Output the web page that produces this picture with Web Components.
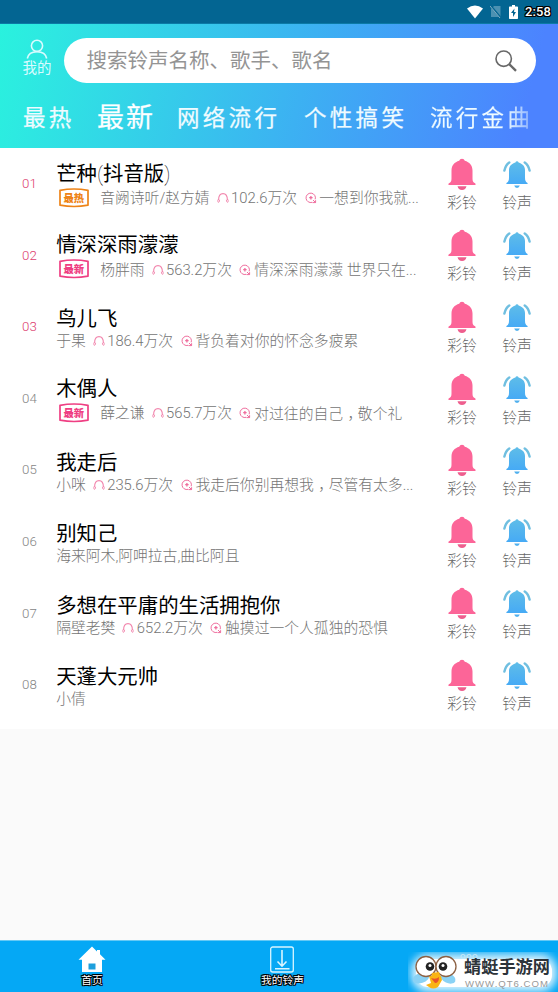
<!DOCTYPE html>
<html lang="zh-CN">
<head>
<meta charset="utf-8">
<title>铃声</title>
<style>
html,body{margin:0;padding:0;background:#fafafa}
body{font-family:Roboto,"Noto Sans CJK SC",sans-serif;width:558px;height:992px;overflow:hidden}
</style>
</head>
<body>
<ring-app></ring-app>
<script>
const define=(name,html)=>customElements.define(name,class extends HTMLElement{
  connectedCallback(){
    if(this.shadowRoot)return;
    this.attachShadow({mode:'open'}).innerHTML=typeof html==='function'?html(this):html;
  }
});

define('status-bar',`<style>
:host{display:flex;height:24px;box-sizing:border-box;background:#036592;align-items:center;justify-content:flex-end;padding-right:7px;border-bottom:1px solid #0b7aa6}
svg{display:block}.w{margin-right:7px}.s{margin-right:8.500px}.b{margin-right:7px}
span{font:500 12.900px/22px Roboto,sans-serif;color:#fff;letter-spacing:.15px;margin-top:1px;text-shadow:1px 0 #000,-1px 0 #000,0 1px #000,0 -1px #000,1px 1px #000,-1px 1px #000,1px -1px #000,-1px -1px #000}
</style>
<svg class="w" width="16" height="14" viewBox="0 0 16 14"><path d="M0 3.600Q8-2.400 16 3.600L8 13.500Z" fill="#fff"/></svg>
<svg class="s" width="11" height="13" viewBox="0 0 11 13"><path d="M4 1h6.500v11H1V4z" fill="#4b91b2"/><path d="M0 0l11 13" stroke="#036592" stroke-width="2"/><path d="M0 1l10 12" stroke="#82aec4" stroke-width="1"/></svg>
<svg class="b" width="9" height="14" viewBox="0 0 9 14"><path d="M3 0h3v1.500h2.300q.7 0 .7.700v11q0 .8-.7.800H.7Q0 14 0 13.200V2.200q0-.7.7-.7H3z" fill="#fff"/><path d="M5.500 3.500L2 8h2v4l3-5H5z" fill="#036592"/></svg>
<span>2:58</span>`);

define('profile-button',`<style>
:host{display:flex;flex-direction:column;align-items:center;width:30px;color:#d9fbff;padding-top:1px}
svg{display:block}span{font-size:14.500px;line-height:17px;white-space:nowrap;margin-top:1px}
</style>
<svg width="22" height="20" viewBox="0 0 22 20" fill="none" stroke="currentColor" stroke-width="1.600"><circle cx="11" cy="6.800" r="5.600"/><path d="M1.300 19.500C2.200 14.800 6 12.800 11 12.800s8.800 2 9.700 6.700"/></svg>
<span><slot></slot></span>`);

define('search-field',`<style>
:host{display:flex;align-items:center;justify-content:space-between;box-sizing:border-box;width:472px;height:45px;border-radius:23px;background:#fff;padding:0 19px 0 22.500px;color:#949494;font-size:20.500px;line-height:45px}
svg{display:block}span{margin-top:1px}
</style><span><slot></slot></span>
<svg width="22" height="22" viewBox="0 0 22 22" fill="none" stroke="#686868"><circle cx="8.700" cy="8.700" r="7.700" stroke-width="1.600"/><path d="M14.200 14.200L21 20.800" stroke-width="2.300"/></svg>`);

define('category-tab',`<style>
:host{display:block;font-size:22.500px;line-height:34px;letter-spacing:3.300px;color:#effbff;white-space:nowrap;-webkit-text-stroke:.25px #effbff}
:host([active]){font-size:27px;letter-spacing:2px;color:#fff}
:host([fade]){background:linear-gradient(90deg,#effbff 72%,rgba(239,251,255,.3) 101%);-webkit-background-clip:text;background-clip:text;color:transparent;-webkit-text-stroke:.25px transparent}
</style><slot></slot>`);

define('ring-header',`<style>
:host{display:flex;flex-direction:column;height:124px;box-sizing:border-box;padding-top:14px;background:linear-gradient(104deg,#29f2de 0%,#2deae1 7%,#3cb1f2 54%,#4c83ff 93%,#4c83ff 100%)}
.top{display:flex;padding-left:22px;gap:12px}
.tabs{display:grid;grid-template-columns:74px 80px 127px 126px 104px;padding-left:23px;margin-top:17px;align-items:center;height:36px}
</style>
<div class="top"><profile-button>我的</profile-button><search-field>搜索铃声名称、歌手、歌名</search-field></div>
<div class="tabs"><category-tab>最热</category-tab><category-tab active>最新</category-tab><category-tab>网络流行</category-tab><category-tab>个性搞笑</category-tab><category-tab fade>流行金曲</category-tab></div>`);

define('song-badge',`<style>
:host{display:grid;width:32px;height:20px;margin:-1px 10.500px 0 1.500px;color:#ef3f83}
:host([hot]){color:#ee8418}
svg,span{grid-area:1/1}span{font:900 10.300px/19px "Noto Sans CJK SC",sans-serif;text-align:center}
</style>
<svg width="32" height="20" viewBox="0 0 32 20"><path d="M2 2.300Q16-.3 30 2.300V17.200Q16 19.800 2 17.200Z" fill="none" stroke="currentColor" stroke-width="1.700" stroke-linejoin="round"/></svg><span><slot></slot></span>`);

define('play-count',`<style>
:host{display:flex;align-items:center;margin-left:7px}svg{margin-right:2.400px}
</style><svg width="12" height="12" viewBox="0 0 12 12" fill="none" stroke="#f287ae" stroke-width="1.100"><path d="M1.600 8C1.600 4 3.200 1.600 6 1.600S10.400 4 10.400 8"/><path d="M1.300 7.200Q.1 9.200 1.300 10.400q1.500-.2 1.300-2.600M10.700 7.200q1.200 2 0 3.200-1.500-.2-1.300-2.600" stroke-width=".9"/></svg><slot></slot>`);

define('song-lyric',`<style>
:host{display:flex;align-items:center;margin-left:7.500px;white-space:pre}svg{margin-right:2.800px}
</style><svg width="12" height="12" viewBox="0 0 12 12" fill="none" stroke="#ef6d9d" stroke-width="1"><path d="M7.200 10.300A4.700 4.700 0 1 1 10.200 7.300M8 8l2.600 2.600H7.500M10.600 10.600V8.200"/><path d="M4.200 5.700h3.400M5.900 4v3.400" stroke-width="1.300"/></svg><span><slot></slot></span>`);

define('ring-action',el=>`<style>
:host{display:flex;flex-direction:column;align-items:center;width:55px;font-size:14.800px;font-weight:300;line-height:20px;color:#666}
svg{display:block}span{margin-top:2px}
</style>${el.getAttribute('kind')==='color'
?`<svg width="30" height="34" viewBox="0 0 30 34"><path d="M12.200 3.800a2.900 2.900 0 0 1 5.600 0C22.500 5.200 25.500 8.500 25.500 13.500v8c0 2.500.5 3.700 2.600 4.800q.9.600.3 1.700H1.600q-.6-1.100.3-1.700c2.100-1.100 2.600-2.300 2.600-4.800v-8c0-5 3-8.300 7.700-9.700z" fill="#fc6598"/><path d="M10.500 29.300h9q-.8 3.700-4.500 3.700t-4.500-3.700z" fill="#ee5e8e"/></svg>`
:`<svg width="30" height="34" viewBox="0 0 30 34"><defs><linearGradient id="g" x2="0" y2="1"><stop stop-color="#5fbde8"/><stop offset="1" stop-color="#46aaf5"/></linearGradient></defs><path d="M13.400 5.500a1.700 1.700 0 0 1 3.200 0C20.500 6.600 23 9.400 23 13v7.500c0 3 .6 4.200 2.200 5.200q.7.500.3 1.300h-21q-.4-.8.300-1.300C6.400 24.700 7 23.500 7 20.500V13c0-3.600 2.500-6.400 6.400-7.500z" fill="url(#g)"/><path d="M12.200 28.500h5.600q-.6 2.400-2.800 2.400t-2.800-2.400z" fill="#50b0ee"/><path d="M7.300 5.500Q3.600 8 2.400 13.500M22.700 5.500q3.700 2.500 4.900 8" fill="none" stroke="#70bfe0" stroke-width="2.400" stroke-linecap="round"/></svg>`}
<span><slot></slot></span>`);

define('song-row',`<style>
:host{display:grid;grid-template-columns:56.200px 1fr auto;height:71.600px;box-sizing:border-box}
.no{font-size:13.300px;font-weight:300;line-height:72px;padding-left:22px;color:#858585;font-family:Roboto,sans-serif}
:host([top]) .no{color:#dd416f}
.info{display:flex;flex-direction:column;min-width:0}
.title{font-size:20.400px;line-height:26px;color:#000;padding-top:15.300px;height:26px;white-space:nowrap}
:host([tag]) .title{padding-top:12.800px;padding-bottom:2.500px}
.sub{display:flex;align-items:center;height:20px;margin-top:-1px;font-size:14.800px;font-weight:300;color:#747474;line-height:20px;white-space:nowrap}
.act{display:flex;padding:8.800px 13.500px 0 0}
</style>
<div class="no"><slot name="no"></slot></div>
<div class="info"><div class="title"><slot name="title"></slot></div><div class="sub"><slot></slot></div></div>
<div class="act"><ring-action kind="color">彩铃</ring-action><ring-action kind="tone">铃声</ring-action></div>`);

const songs=[
['芒种<span style="font-weight:100">(</span>抖音版<span style="font-weight:100">)</span>','最热','音阙诗听/赵方婧','102.6万次','一想到你我就...'],
['情深深雨濛濛','最新','杨胖雨','563.2万次','情深深雨濛濛 世界只在...'],
['鸟儿飞','','于果','186.4万次','背负着对你的怀念多疲累'],
['木偶人','最新','薛之谦','565.7万次','对过往的自己，敬个礼'],
['我走后','','小咪','235.6万次','我走后你别再想我，尽管有太多...'],
['别知己','','海来阿木,阿呷拉古,曲比阿且'],
['多想在平庸的生活拥抱你','','隔壁老樊','652.2万次','触摸过一个人孤独的恐惧'],
['天蓬大元帅','','小倩']];
define('song-list',()=>`<style>
:host{display:block;background:#fff;height:581px}
/* half-width comma, centred in one character cell */
i{font-style:normal;font-family:"Noto Sans CJK SC",sans-serif;font-feature-settings:"halt";padding:0 2.900px 0 4.500px}
</style>${songs.map(([t,b,a,c,l],n)=>`<song-row${n<3?' top':''}${b?' tag':''}><span slot="no">0${n+1}</span><span slot="title">${t}</span>${b?`<song-badge${b==='最热'?' hot':''}>${b}</song-badge>`:''}<span>${a}</span>${c?`<play-count>${c}</play-count><song-lyric>${l.replace('，','<i>，</i>')}</song-lyric>`:''}</song-row>`).join('')}`);

define('nav-item',el=>`<style>
:host{display:flex;flex-direction:column;align-items:center;justify-self:center;color:#fff;font-size:10.700px;line-height:14px;padding-top:5px}
svg{display:block}span{margin-top:1px;text-shadow:1px 0 #000,-1px 0 #000,0 1px #000,0 -1px #000,1px 1px #000,-1px 1px #000,1px -1px #000,-1px -1px #000}
</style>${el.hasAttribute('home')
?`<svg width="28" height="27" viewBox="0 0 28 27"><path d="M14 .5L.5 13.800H4V26h20V13.800h3.500L22 8.300V4h-3v1.500z" fill="#fff"/><path d="M10.500 17.500h7v6h-7z" fill="#1e9fdc"/></svg>`
:`<svg width="26" height="27" viewBox="0 0 26 27" fill="none" stroke="#d9f5ff" stroke-width="1.300"><rect x="1.700" y="1" width="22.600" height="25" rx="2"/><path d="M13 4v16M8.500 15.500L13 20.200l4.500-4.700M6 22.800h14.500" stroke-width="1.600"/></svg>`}
<span><slot></slot></span>`);

define('site-mark',`<style>
:host{position:absolute;right:0;bottom:0;width:150px;height:40px;overflow:hidden}
.m{position:relative;display:flex;padding:0 0 0 4px;height:40px;box-sizing:border-box}
.m::before{content:"";position:absolute;inset:7px 6px 5px 8px;border-radius:12px;background:#fff;box-shadow:0 0 9px 5px rgba(255,255,255,.85)}
svg,.t{position:relative}
.t{display:flex;flex-direction:column;padding-left:6px;padding-top:1px}
.m .dots{position:absolute;left:51px;top:1px}
b{font:700 17.200px/26px "Noto Sans CJK SC",sans-serif;color:#2d343a;white-space:nowrap}
small{font:400 9.600px/11px "Liberation Sans",sans-serif;letter-spacing:1px;color:#999;white-space:nowrap;padding-left:1px;margin-top:-1px}
</style>
<div class="m"><svg width="46" height="38" viewBox="0 0 46 38"><ellipse cx="9" cy="26" rx="8.500" ry="5" fill="#8ad2f5" transform="rotate(-18 9 26)"/><ellipse cx="36" cy="26" rx="8" ry="5" fill="#8ad2f5" transform="rotate(25 36 26)"/><path d="M17 24l12 0 1 4-4 7q-5 3-9 0l-3-2 5-2z" fill="#fab414"/><circle cx="14" cy="14.500" r="10" fill="#fff" stroke="#8c6144" stroke-width="1.300"/><circle cx="34" cy="14.500" r="10" fill="#fff" stroke="#8c6144" stroke-width="1.300"/><path d="M20 21l7-1 2 7-4 3-6-3z" fill="#fab414"/><circle cx="18" cy="14.500" r="4.300" fill="#222"/><circle cx="31" cy="14.500" r="4.300" fill="#222"/><circle cx="18" cy="13.500" r="1.500" fill="#fff"/><circle cx="31" cy="13.500" r="1.500" fill="#fff"/><path d="M19 26q5 2 8-1 0 6-4 6z" fill="#e8532a"/></svg>
<svg class="dots" width="20" height="7" viewBox="0 0 20 7" fill="none" stroke="#c3e6f6" stroke-width="1.200"><circle cx="4" cy="3.500" r="2"/><circle cx="10" cy="3.500" r="2"/><circle cx="16" cy="3.500" r="2"/></svg>
<div class="t"><b>蜻蜓手游网</b><small>WWW.QT6.COM</small></div></div>`);

define('bottom-nav',`<style>
:host{display:grid;grid-template-columns:184px 197px 177px;height:52px;box-sizing:border-box;border-top:1px solid #66c9f5;background:#05a8f5;position:relative;margin-top:auto}
</style><nav-item home>首页</nav-item><nav-item>我的铃声</nav-item><site-mark></site-mark>`);

define('ring-app',`<style>
:host{display:flex;flex-direction:column;width:558px;height:992px;background:#fafafa}
</style><status-bar></status-bar><ring-header></ring-header><song-list></song-list><bottom-nav></bottom-nav>`);
</script>
</body>
</html>
